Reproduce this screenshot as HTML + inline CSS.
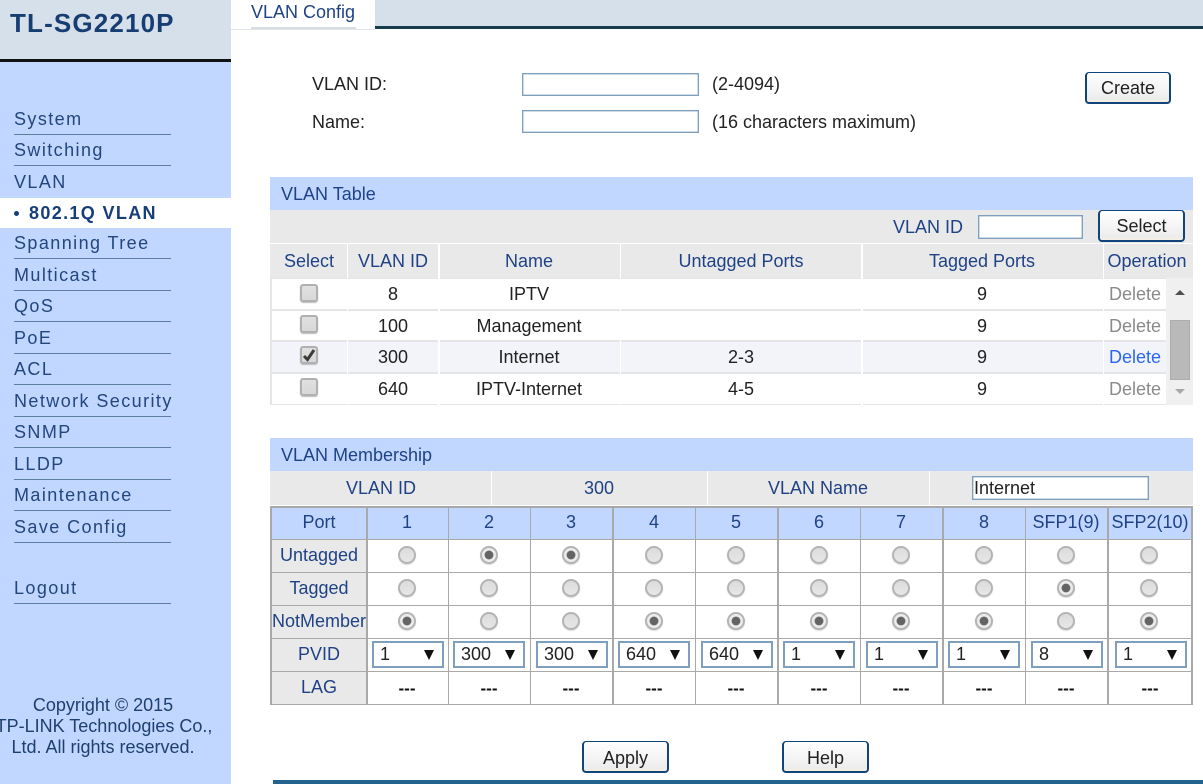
<!DOCTYPE html>
<html><head><meta charset="utf-8"><title>TL-SG2210P</title>
<style>
html,body{margin:0;padding:0;background:#fff;overflow:hidden}
body{width:1203px;height:784px;position:relative;font-family:"Liberation Sans",sans-serif;font-size:18px;color:#222}
.a,.t,.m,.l,.c,.r,.s,.b,.i{position:absolute}
.t{white-space:nowrap;line-height:20px}
.c{white-space:nowrap;line-height:20px;text-align:center;transform:translateX(-50%)}
.n{color:#1f4286}
.m{left:14px;color:#23467f;letter-spacing:1.42px;line-height:20px;white-space:nowrap}
.l{left:14px;width:157px;height:1px;background:#5f7f9f}
.i{background:#fff;border:1px solid #7f9fbf;box-sizing:border-box;box-shadow:inset 0 0 0 .5px #9fb7cf}
.b{background:linear-gradient(#fff,#f3f3f3 60%,#ececec 90%,#f6f0df);border:1px solid #12447c;border-width:1px 2px 2px 2px;border-radius:4px;box-sizing:border-box;text-align:center;color:#222;line-height:30px}
.g{position:absolute;background:#a9a9a9}
.r{width:18px;height:18px;border-radius:50%;box-sizing:border-box;border:2px solid #b4b4b4;background:linear-gradient(#dcdcdc,#e6e6e6);box-shadow:0 1px 1px #ddd}
.r.o{background:#ececec}
.r.o::after{content:"";position:absolute;left:3px;top:3px;width:8px;height:8px;border-radius:50%;background:#646464;box-shadow:0 0 0 .5px #777}
.s{width:72px;height:27px;background:#fff;border:2px solid #7f9fbf;box-sizing:border-box;color:#222;line-height:23px;padding-left:6px;top:641px}
.s i{position:absolute;right:8px;top:7px;width:0;height:0;border-left:5px solid transparent;border-right:5px solid transparent;border-top:10px solid #111}
.k{position:absolute;left:300px;width:18px;height:18px;box-sizing:border-box;border:2px solid #b0b0b0;border-radius:3px;background:linear-gradient(#e0e0e0,#d8d8d8);box-shadow:0 1px 1px #bbb}
.d{color:#8a8a8a}
.h{color:#111;font-weight:bold;font-size:17px;top:679px}
</style></head><body>

<!-- sidebar -->
<div class="a" style="left:0;top:0;width:231px;height:784px;background:#c1d7ff"></div>
<div class="a" style="left:0;top:0;width:231px;height:59px;background:#d6e0ea"></div>
<div class="a" style="left:0;top:59px;width:231px;height:3px;background:#111"></div>
<div class="t" style="left:10px;top:8px;font-size:26px;line-height:30px;font-weight:bold;color:#173e72;letter-spacing:1.15px">TL-SG2210P</div>

<div class="m" style="top:109px">System</div><div class="l" style="top:134px"></div>
<div class="m" style="top:140px">Switching</div><div class="l" style="top:165px"></div>
<div class="m" style="top:172px">VLAN</div>
<div class="a" style="left:0;top:198px;width:231px;height:30px;background:#fff"></div>
<div class="a" style="left:14px;top:211px;width:5px;height:5px;border-radius:50%;background:#173e78"></div>
<div class="m" style="left:29px;top:203px;font-weight:bold;color:#173e78;letter-spacing:1.35px">802.1Q VLAN</div>
<div class="m" style="top:233px">Spanning Tree</div><div class="l" style="top:258px"></div>
<div class="m" style="top:265px">Multicast</div><div class="l" style="top:290px"></div>
<div class="m" style="top:296px">QoS</div><div class="l" style="top:321px"></div>
<div class="m" style="top:328px">PoE</div><div class="l" style="top:353px"></div>
<div class="m" style="top:359px">ACL</div><div class="l" style="top:384px"></div>
<div class="m" style="top:391px">Network Security</div><div class="l" style="top:416px"></div>
<div class="m" style="top:422px">SNMP</div><div class="l" style="top:447px"></div>
<div class="m" style="top:454px">LLDP</div><div class="l" style="top:479px"></div>
<div class="m" style="top:485px">Maintenance</div><div class="l" style="top:510px"></div>
<div class="m" style="top:517px">Save Config</div><div class="l" style="top:542px"></div>
<div class="m" style="top:578px">Logout</div><div class="l" style="top:603px"></div>

<div class="c" style="left:103px;top:695px;color:#1f3f70">Copyright © 2015</div>
<div class="c" style="left:104px;top:716px;color:#1f3f70">TP-LINK Technologies Co.,</div>
<div class="c" style="left:103px;top:737px;color:#1f3f70">Ltd. All rights reserved.</div>

<!-- top -->
<div class="a" style="left:375px;top:0;width:828px;height:26px;background:#d6e0ea"></div>
<div class="a" style="left:375px;top:26px;width:828px;height:3px;background:#173c4e"></div>
<div class="a" style="left:231px;top:29px;width:144px;height:1px;background:#dfe5ea"></div>
<div class="a" style="left:251px;top:27px;width:105px;height:2px;background:#d6dde3"></div>
<div class="t n" style="left:251px;top:2px">VLAN Config</div>

<!-- form -->
<div class="t" style="left:312px;top:74px">VLAN ID:</div>
<div class="t" style="left:312px;top:112px">Name:</div>
<div class="i" style="left:522px;top:73px;width:177px;height:23px"></div>
<div class="i" style="left:522px;top:110px;width:177px;height:23px"></div>
<div class="t" style="left:712px;top:74px">(2-4094)</div>
<div class="t" style="left:712px;top:112px">(16 characters maximum)</div>
<div class="b" style="left:1085px;top:72px;width:86px;height:32px">Create</div>

<!-- VLAN table -->
<div class="a" style="left:270px;top:177px;width:923px;height:33px;background:#c1d7ff"></div>
<div class="t n" style="left:281px;top:184px">VLAN Table</div>
<div class="a" style="left:270px;top:210px;width:923px;height:33px;background:#e9e9e9"></div>
<div class="t n" style="left:893px;top:217px">VLAN ID</div>
<div class="i" style="left:978px;top:215px;width:105px;height:24px"></div>
<div class="b" style="left:1098px;top:210px;width:87px;height:32px">Select</div>

<div class="a" style="left:270px;top:244px;width:923px;height:34px;background:#e9e9e9"></div>
<div class="a" style="left:270px;top:278px;width:923px;height:127px;background:#e5e5e5"></div>
<!-- rows -->
<div class="a" style="left:272px;top:279px;width:894px;height:30px;background:#fff"></div>
<div class="a" style="left:272px;top:311px;width:894px;height:29px;background:#fff"></div>
<div class="a" style="left:272px;top:342px;width:894px;height:30px;background:#f2f4f9"></div>
<div class="a" style="left:272px;top:374px;width:894px;height:30px;background:#fff"></div>
<!-- column separators -->
<div class="a" style="left:347px;top:244px;width:1px;height:161px;background:#fff"></div>
<div class="a" style="left:438px;top:244px;width:2px;height:161px;background:#fff"></div>
<div class="a" style="left:620px;top:244px;width:1px;height:161px;background:#fff"></div>
<div class="a" style="left:861px;top:244px;width:2px;height:161px;background:#fff"></div>
<div class="a" style="left:1103px;top:244px;width:1px;height:161px;background:#fff"></div>
<!-- scrollbar -->
<div class="a" style="left:1166px;top:278px;width:27px;height:127px;background:#f0f0f0"></div>
<div class="a" style="left:1170px;top:320px;width:20px;height:60px;background:#b9b9b9;box-sizing:border-box;border:1px solid #adadad"></div>
<div class="a" style="left:1175px;top:290px;width:0;height:0;border-left:5px solid transparent;border-right:5px solid transparent;border-bottom:5px solid #505050"></div>
<div class="a" style="left:1175px;top:389px;width:0;height:0;border-left:5px solid transparent;border-right:5px solid transparent;border-top:5px solid #a8a8a8"></div>

<div class="c n" style="left:309px;top:251px">Select</div>
<div class="c n" style="left:393px;top:251px">VLAN ID</div>
<div class="c n" style="left:529px;top:251px">Name</div>
<div class="c n" style="left:741px;top:251px">Untagged Ports</div>
<div class="c n" style="left:982px;top:251px">Tagged Ports</div>
<div class="c n" style="left:1147px;top:251px">Operation</div>

<div class="k" style="top:284px"></div>
<div class="k" style="top:315px"></div>
<div class="k" style="top:346px"><svg width="14" height="14" style="position:absolute;left:0;top:0"><path d="M2 8 L5.5 11.5 L12 2" fill="none" stroke="#3c3c3c" stroke-width="3"/></svg></div>
<div class="k" style="top:378px"></div>

<div class="c" style="left:393px;top:284px">8</div><div class="c" style="left:529px;top:284px">IPTV</div><div class="c" style="left:982px;top:284px">9</div><div class="t d" style="left:1109px;top:284px">Delete</div>
<div class="c" style="left:393px;top:316px">100</div><div class="c" style="left:529px;top:316px">Management</div><div class="c" style="left:982px;top:316px">9</div><div class="t d" style="left:1109px;top:316px">Delete</div>
<div class="c" style="left:393px;top:347px">300</div><div class="c" style="left:529px;top:347px">Internet</div><div class="c" style="left:741px;top:347px">2-3</div><div class="c" style="left:982px;top:347px">9</div><div class="t" style="left:1109px;top:347px;color:#2b66f0">Delete</div>
<div class="c" style="left:393px;top:379px">640</div><div class="c" style="left:529px;top:379px">IPTV-Internet</div><div class="c" style="left:741px;top:379px">4-5</div><div class="c" style="left:982px;top:379px">9</div><div class="t d" style="left:1109px;top:379px">Delete</div>

<!-- Membership -->
<div class="a" style="left:270px;top:438px;width:923px;height:33px;background:#c1d7ff"></div>
<div class="t n" style="left:281px;top:445px">VLAN Membership</div>
<div class="a" style="left:270px;top:471px;width:923px;height:34px;background:#e9e9e9"></div>
<div class="a" style="left:491px;top:471px;width:1px;height:34px;background:#fff"></div>
<div class="a" style="left:707px;top:471px;width:1px;height:34px;background:#fff"></div>
<div class="a" style="left:929px;top:471px;width:1px;height:34px;background:#fff"></div>
<div class="c n" style="left:381px;top:478px">VLAN ID</div>
<div class="c n" style="left:599px;top:478px">300</div>
<div class="c n" style="left:818px;top:478px">VLAN Name</div>
<div class="i" style="left:972px;top:476px;width:177px;height:24px;line-height:22px;padding-left:1px;color:#222">Internet</div>

<div class="a" style="left:271px;top:506px;width:922px;height:33px;background:#c1d7ff"></div>
<div class="a" style="left:271px;top:539px;width:96px;height:165px;background:#e9e9e9"></div>

<div class="g" style="left:270px;top:506px;width:923px;height:2px"></div>
<div class="g" style="left:270px;top:539px;width:923px;height:1px"></div>
<div class="g" style="left:270px;top:572px;width:923px;height:1px"></div>
<div class="g" style="left:270px;top:605px;width:923px;height:1px"></div>
<div class="g" style="left:270px;top:638px;width:923px;height:1px"></div>
<div class="g" style="left:270px;top:671px;width:923px;height:1px"></div>
<div class="g" style="left:270px;top:704px;width:923px;height:1px"></div>
<div class="g" style="left:270px;top:506px;width:2px;height:199px"></div>
<div class="g" style="left:366px;top:506px;width:2px;height:199px"></div>
<div class="g" style="left:448px;top:506px;width:1px;height:199px"></div>
<div class="g" style="left:530px;top:506px;width:1px;height:199px"></div>
<div class="g" style="left:612px;top:506px;width:2px;height:199px"></div>
<div class="g" style="left:695px;top:506px;width:1px;height:199px"></div>
<div class="g" style="left:777px;top:506px;width:2px;height:199px"></div>
<div class="g" style="left:860px;top:506px;width:1px;height:199px"></div>
<div class="g" style="left:942px;top:506px;width:2px;height:199px"></div>
<div class="g" style="left:1025px;top:506px;width:1px;height:199px"></div>
<div class="g" style="left:1107px;top:506px;width:2px;height:199px"></div>
<div class="g" style="left:1191px;top:506px;width:2px;height:199px"></div>

<div class="c n" style="left:319px;top:512px">Port</div>
<div class="c n" style="left:407px;top:512px">1</div>
<div class="c n" style="left:489px;top:512px">2</div>
<div class="c n" style="left:571px;top:512px">3</div>
<div class="c n" style="left:654px;top:512px">4</div>
<div class="c n" style="left:736px;top:512px">5</div>
<div class="c n" style="left:819px;top:512px">6</div>
<div class="c n" style="left:901px;top:512px">7</div>
<div class="c n" style="left:984px;top:512px">8</div>
<div class="c n" style="left:1066px;top:512px">SFP1(9)</div>
<div class="c n" style="left:1150px;top:512px">SFP2(10)</div>
<div class="c n" style="left:319px;top:545px">Untagged</div>
<div class="c n" style="left:319px;top:578px">Tagged</div>
<div class="c n" style="left:319px;top:611px">NotMember</div>
<div class="c n" style="left:319px;top:644px">PVID</div>
<div class="c n" style="left:319px;top:677px">LAG</div>

<!-- radios -->
<div class="r" style="left:398px;top:546px"></div><div class="r o" style="left:480px;top:546px"></div><div class="r o" style="left:562px;top:546px"></div><div class="r" style="left:645px;top:546px"></div><div class="r" style="left:727px;top:546px"></div><div class="r" style="left:810px;top:546px"></div><div class="r" style="left:892px;top:546px"></div><div class="r" style="left:975px;top:546px"></div><div class="r" style="left:1057px;top:546px"></div><div class="r" style="left:1140px;top:546px"></div>
<div class="r" style="left:398px;top:579px"></div><div class="r" style="left:480px;top:579px"></div><div class="r" style="left:562px;top:579px"></div><div class="r" style="left:645px;top:579px"></div><div class="r" style="left:727px;top:579px"></div><div class="r" style="left:810px;top:579px"></div><div class="r" style="left:892px;top:579px"></div><div class="r" style="left:975px;top:579px"></div><div class="r o" style="left:1057px;top:579px"></div><div class="r" style="left:1140px;top:579px"></div>
<div class="r o" style="left:398px;top:612px"></div><div class="r" style="left:480px;top:612px"></div><div class="r" style="left:562px;top:612px"></div><div class="r o" style="left:645px;top:612px"></div><div class="r o" style="left:727px;top:612px"></div><div class="r o" style="left:810px;top:612px"></div><div class="r o" style="left:892px;top:612px"></div><div class="r o" style="left:975px;top:612px"></div><div class="r" style="left:1057px;top:612px"></div><div class="r o" style="left:1140px;top:612px"></div>

<!-- selects -->
<div class="s" style="left:372px">1<i></i></div>
<div class="s" style="left:453px">300<i></i></div>
<div class="s" style="left:536px">300<i></i></div>
<div class="s" style="left:618px">640<i></i></div>
<div class="s" style="left:701px">640<i></i></div>
<div class="s" style="left:783px">1<i></i></div>
<div class="s" style="left:866px">1<i></i></div>
<div class="s" style="left:948px">1<i></i></div>
<div class="s" style="left:1031px">8<i></i></div>
<div class="s" style="left:1115px">1<i></i></div>

<div class="c h" style="left:407px">---</div>
<div class="c h" style="left:489px">---</div>
<div class="c h" style="left:571px">---</div>
<div class="c h" style="left:654px">---</div>
<div class="c h" style="left:736px">---</div>
<div class="c h" style="left:819px">---</div>
<div class="c h" style="left:901px">---</div>
<div class="c h" style="left:984px">---</div>
<div class="c h" style="left:1066px">---</div>
<div class="c h" style="left:1150px">---</div>

<!-- footer buttons -->
<div class="b" style="left:582px;top:741px;width:87px;height:32px;line-height:32px">Apply</div>
<div class="b" style="left:782px;top:741px;width:87px;height:32px;line-height:32px">Help</div>
<div class="a" style="left:273px;top:780px;width:930px;height:4px;background:#23648f"></div>
</body></html>
